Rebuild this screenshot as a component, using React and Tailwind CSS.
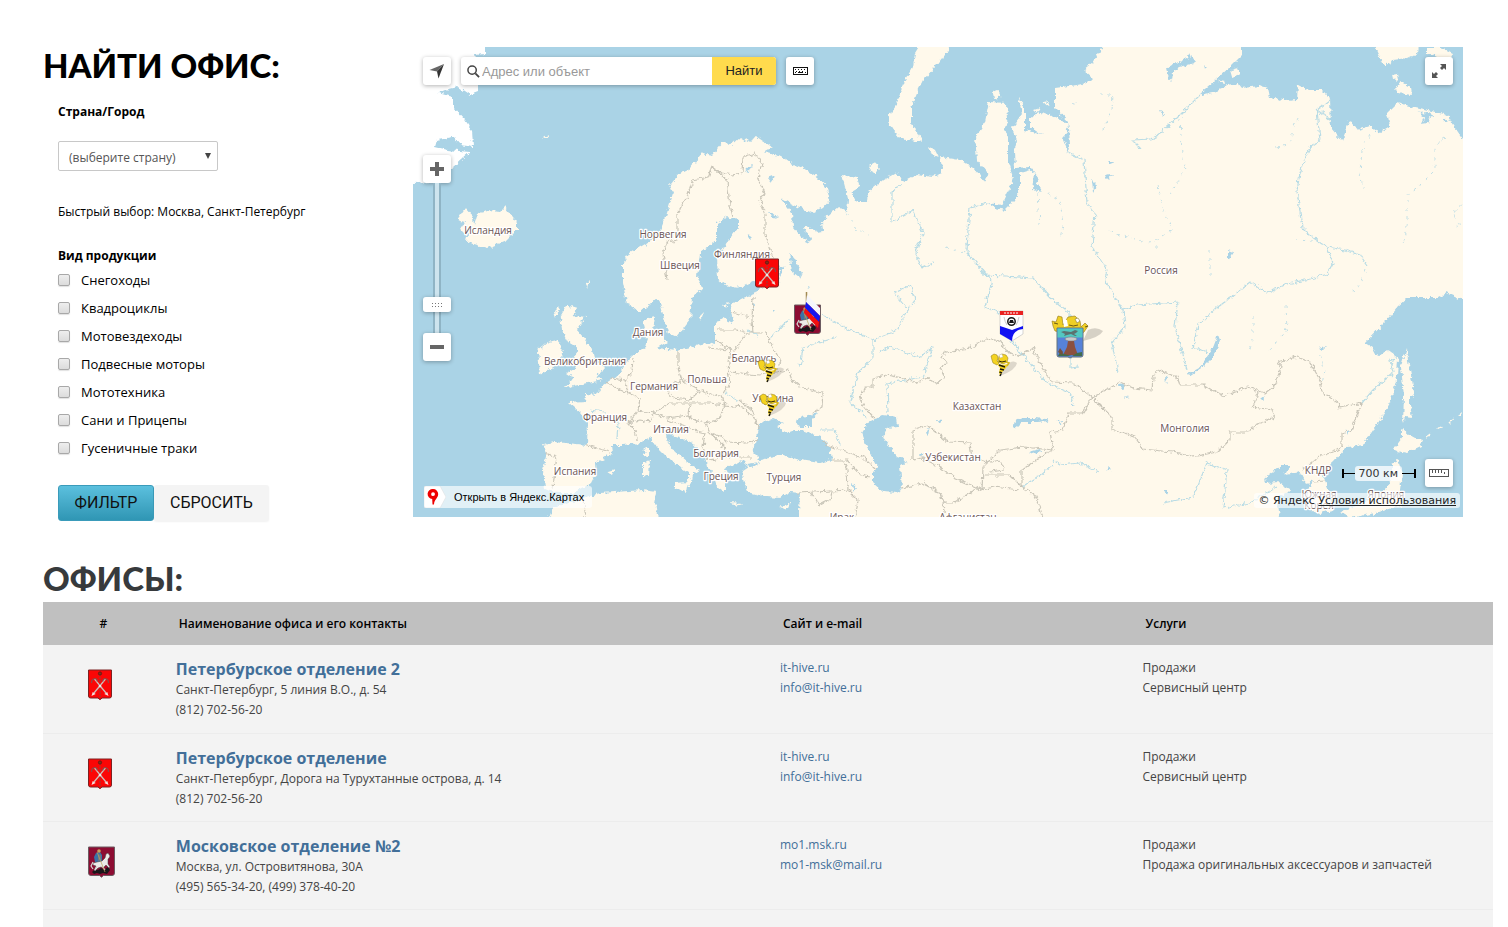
import React, { useState } from 'react'

const PRODUCTS = [
  'Снегоходы',
  'Квадроциклы',
  'Мотовездеходы',
  'Подвесные моторы',
  'Мототехника',
  'Сани и Прицепы',
  'Гусеничные траки',
]

const OFFICES = [
  {
    id: 1,
    city: 'spb',
    name: 'Петербурское отделение 2',
    address: 'Санкт-Петербург, 5 линия В.О., д. 54',
    phone: '(812) 702-56-20',
    site: 'it-hive.ru',
    email: 'info@it-hive.ru',
    services: ['Продажи', 'Сервисный центр'],
  },
  {
    id: 2,
    city: 'spb',
    name: 'Петербурское отделение',
    address: 'Санкт-Петербург, Дорога на Турухтанные острова, д. 14',
    phone: '(812) 702-56-20',
    site: 'it-hive.ru',
    email: 'info@it-hive.ru',
    services: ['Продажи', 'Сервисный центр'],
  },
  {
    id: 3,
    city: 'msk',
    name: 'Московское отделение №2',
    address: 'Москва, ул. Островитянова, 30А',
    phone: '(495) 565-34-20, (499) 378-40-20',
    site: 'mo1.msk.ru',
    email: 'mo1-msk@mail.ru',
    services: ['Продажи', 'Продажа оригинальных аксессуаров и запчастей'],
  },
]

const COUNTRIES = [
  ['Исландия', 488, 234],
  ['Норвегия', 663, 238],
  ['Швеция', 680, 269],
  ['Финляндия', 742, 258],
  ['Дания', 648, 336],
  ['Беларусь', 754, 362],
  ['Великобритания', 585, 365],
  ['Германия', 654, 390],
  ['Польша', 707, 383],
  ['Украина', 773, 402],
  ['Франция', 605, 421],
  ['Италия', 671, 433],
  ['Болгария', 716, 457],
  ['Греция', 721, 480],
  ['Испания', 575, 475],
  ['Турция', 784, 481],
  ['Россия', 1161, 274],
  ['Казахстан', 977, 410],
  ['Узбекистан', 953, 461],
  ['Монголия', 1185, 432],
  ['КНДР', 1318, 474],
  ['Южная', 1319, 498],
  ['Корея', 1319, 509],
  ['Япония', 1386, 498],
  ['Афганистан', 968, 521],
  ['Ирак', 842, 521],
]

const LAND = [
  // Eurasia
  'M670 185 680 173 690 168 702 153 712 155 723 142 731 145 740 137 748 142 757 137 772 147 763 152 782 157 790 163 803 168 817 177 827 188 830 200 823 208 813 213 797 207 780 198 792 213 793 227 802 238 810 242 811 237 803 230 806 226 818 232 823 231 822 221 832 212 838 207 847 212 848 200 845 187 842 175 857 178 860 187 850 193 857 202 867 202 868 192 883 180 898 172 903 182 917 175 933 177 942 173 942 167 940 157 960 160 973 168 985 182 988 173 977 160 975 137 985 122 989 102 1007 103 1008 118 1005 128 1008 137 1008 163 1013 177 1009 190 1002 205 988 203 995 208 1005 210 1015 200 1020 188 1020 173 1030 170 1035 173 1033 190 1042 192 1037 183 1039 178 1030 167 1015 168 1014 153 1017 140 1012 128 1022 115 1020 102 1018 97 1025 107 1025 130 1042 135 1030 127 1030 118 1042 112 1057 118 1067 123 1068 128 1063 140 1068 152 1070 143 1069 130 1068 122 1055 108 1055 88 1077 85 1087 83 1092 78 1083 70 1093 62 1107 40H1242V55L1230 67 1213 82 1200 93 1203 95 1217 92 1227 85 1238 83 1242 88 1260 86 1268 88 1270 97 1287 101 1297 100 1298 85 1308 90 1322 90 1330 98 1331 128 1342 141 1350 120 1358 130 1370 126 1380 133 1390 127 1387 113 1397 103 1420 108 1447 115 1453 125 1463 139 1475 145V297L1463 300 1447 293 1437 298 1407 298 1397 307 1387 320 1365 343 1373 348 1378 357 1387 350 1398 358 1397 377 1390 403 1380 420 1363 445 1347 447 1333 462 1317 473 1323 477 1330 493 1332 510 1316 514 1308 505V490L1313 480 1306 484 1300 472 1285 475 1290 465 1282 465 1265 478 1266 483 1277 482 1292 490 1277 497 1282 530H798L800 493 790 492 780 498 767 497 747 492 742 470 748 466 743 461 738 463 725 467 730 477 725 483V493L717 487 712 473 707 467 705 457 693 443 677 437 668 432 665 437 673 450 687 462 700 470 693 474 692 483 688 487V472L670 460 657 447 650 437 640 443 623 445 612 445 613 453 595 463 596 475 592 483 573 493 557 493 545 488 543 470 547 453 543 445 553 442 587 445 588 423 580 413 568 403 585 402 586 394 597 395 603 385 618 375 623 367 632 355 645 348 647 337 643 320 655 317 653 330 667 342 657 348 677 350 707 343 715 345V323L723 318 733 323 730 305 743 298 757 293 742 289 725 285 718 280 717 257 738 227V220L727 217 717 223V240L700 253 697 277 703 287 692 297 690 320 677 337 668 333 660 303 657 298 640 312 627 303 623 283V263L630 253 657 237 667 213 673 193Z',
  // British Isles
  'M567 305 577 308 573 315 585 317 577 330 583 337 592 350 595 362 605 367 597 377 603 380 587 383 565 388 573 377 567 373 575 368 574 360 578 348 568 342 562 330 560 317Z',
  'M557 340 563 347 560 363 540 375 538 350 548 342Z',
  // Iceland
  'M457 220 465 208 473 217 474 226 478 213 488 211 500 212 505 207 517 222V230L507 240 488 248 467 242 468 235 460 230 465 222Z',
  // North Africa
  'M545 530 553 507 577 500 600 493 643 490 657 492 655 503 660 530Z',
  // Mediterranean islands
  'M675 483 688 482 686 493 675 487Z M643 462 650 460 649 477 643 476Z M644 450 649 447 649 458 645 456Z M607 472 614 470 612 475Z M730 503 743 504 736 506Z M780 507 791 502 786 509Z',
  // Novaya Zemlya and arctic islands
  'M923 40H955L937 65 923 80 918 90 911 107V123L922 142 900 138 888 123V117L897 103 903 85 913 67 915 53Z',
  'M929 146 935 150 939 158 932 155Z M869 166 875 162 880 168 874 174Z M993 92 998 90 1002 97 994 99Z M1043 102 1049 101 1048 106Z M1034 110 1040 108 1037 113Z',
  'M1373 40 1376 50 1382 63 1390 65 1393 60 1408 58 1418 53 1420 40Z M1427 47H1440L1453 53 1450 60 1427 54Z M1395 90 1400 82 1411 88 1412 95 1398 93Z M1392 75 1397 74 1398 79 1393 80Z M1230 70 1238 68 1240 74 1232 77Z M1218 82 1225 79 1226 84Z',
  // Sakhalin, Hokkaido, Honshu
  'M1407 348 1408 360 1415 397 1410 395V407L1412 418 1405 417 1403 423 1404 397 1401 367Z',
  'M1402 428 1412 437 1423 440 1420 447 1407 453 1393 450 1402 438Z',
  'M1392 463 1398 460 1402 473 1400 490 1402 505 1380 512 1350 518 1340 512 1370 500 1387 488 1392 476Z',
  'M1425 437 1432 432 1429 438Z M1437 429 1443 425 1440 430Z M1448 422 1455 418 1450 424Z M1458 416 1463 412 1462 416Z',
  // small islands of the north Atlantic and the Baltic
  'M543 138 549 134 548 138Z M586 284 590 281 588 288Z M554 312 560 306 556 318Z M657 333 664 331 663 341 657 339Z M699 317 704 312 701 321Z M722 305 728 303 725 308Z',
]

const GREENLAND =
  'M400 40H485V54L475 55 478 68 470 72 478 82V92L470 95 458 87 445 90 438 93 453 97V107L465 120 472 130 473 147 460 145 453 137 437 140 435 147 448 150 470 152 453 167 430 182 400 184Z'

const SEAS = [
  // Black Sea and Azov
  'M772 418 783 423 777 427 787 433 795 430 802 430 820 437 830 447 832 460 820 463 800 460 783 455 760 460 752 452 757 437 760 423Z',
  'M795 420 808 415 818 413 812 420 812 427 800 427Z',
  // Caspian
  'M868 423 883 415 897 417 898 427 887 428 883 437 892 450 897 456 903 458 907 463 900 465 902 488 898 493 883 492 873 483V472L878 467 872 456 867 447 862 433Z',
  // Gulf of Finland
  'M722 290 742 287 755 281 778 277 781 282 765 285 755 292 742 297 720 302Z',
  // Ladoga, Onega
  'M789 253 794 258 802 272 799 278 792 272Z M778 265 785 268 780 277Z M752 300 755 305 753 310Z',
  // Baikal, Balkhash, Issyk-Kul
  'M1218 335 1220 340 1215 355 1203 367 1190 376 1187 374 1200 367 1212 350Z',
  'M1013 430 1015 421 1022 418 1035 418 1045 419 1049 421 1036 422 1022 422 1017 427Z',
  'M1029 452 1040 449 1041 452 1033 454Z',
  'M926 434 930 425 928 436Z M937 419 943 420 940 423Z M1058 420 1062 422 1061 425Z M1070 403 1076 407 1071 406Z M920 454 924 452 923 458Z M852 484 856 487 853 492Z M747 464 760 462 752 467Z',
  'M1119 385 1126 384 1124 389 1120 388Z M1165 376 1168 377 1166 384Z M1123 396 1129 397 1125 398Z M1261 399 1266 395 1263 401Z M1346 431 1350 430 1348 435Z M1162 491 1168 491 1167 495Z M1108 466 1112 469 1109 471Z',
  'M1166 70 1170 65 1180 62 1188 57 1190 53 1192 59 1195 63 1180 67 1173 72 1172 81 1169 77Z M1204 65 1207 68 1205 69Z M1160 111 1164 112 1162 115Z M1072 102 1075 103 1073 104Z',
  'M744 170 752 165 750 172Z M768 178 776 175 771 182Z M770 211 778 218 772 217Z M747 235 753 237 750 240Z M773 310 776 310 774 312Z M808 286 811 287 809 289Z M1418 113 1428 112 1432 115 1428 123 1421 124 1424 117Z M1443 118 1448 122 1444 122Z',
  'M1092 180 1097 185 1093 192Z M1108 162 1115 162 1110 164Z M1105 175 1112 174 1107 180Z M1228 250 1233 252 1228 260Z M1318 348 1327 346 1322 351Z',
]

const BORDERS = [
  'M667 280 663 253 667 242 677 240 677 213 687 197 693 180 708 177 712 167 722 173 733 175 742 173 743 157 755 153 762 163 758 178 765 193 760 200 765 215 765 235 772 255 775 260',
  'M712 167 727 180 730 205 733 217',
  'M633 358 632 373 625 380 628 393 640 398 638 410 628 423 635 430 637 440M605 382 620 390 628 393M612 378 625 380',
  'M678 350 678 367 682 380 665 388 673 398 690 400 700 390 712 395 722 396 730 383 728 370 731 350 708 348M682 380 700 390',
  'M638 410 653 413 670 403 690 403 688 415 667 418 653 413 650 422 640 420 628 423',
  'M690 403 710 403 725 405 718 420 705 423 693 420 688 415M722 396 725 405 743 407 755 420 760 430',
  'M705 423 710 433 723 437 727 442 747 443 757 440M667 420 693 430 705 433 703 447 707 460M710 433 725 447 723 457 710 460M723 457 753 457',
  'M587 445 610 452M545 453 557 457 555 470 553 488M586 517 583 500',
  'M717 330 738 330 747 333M732 312 743 315 752 317M715 340 727 348 735 350 747 333 753 333',
  'M730 372 760 375 788 370 792 380 800 387 823 393 822 407 812 413',
  'M753 297 752 320 753 333 765 333 780 360 778 370M740 400 752 410 758 425',
  'M874 419 865 408 860 398 865 387 873 387V378L887 375 903 378 917 383 927 378 935 383 945 378 940 368 948 363 942 358 945 352 970 348 988 338 1002 342 1007 352 1017 357 1033 348 1042 367 1052 382 1073 383 1092 397 1110 388 1120 382 1133 388 1152 390 1153 377 1158 370 1177 377 1180 385 1203 385 1223 396 1247 387 1265 393 1273 387 1282 367 1278 362 1297 357 1310 362 1320 380 1322 392 1338 402 1340 408 1362 403 1352 430 1342 433V447L1337 450 1317 458 1302 470',
  'M1258 392 1253 407 1273 410 1275 417 1260 423 1247 432 1230 432V440L1217 452 1192 457 1172 452 1143 449 1135 437 1112 430V417L1100 405 1092 397 1083 413 1068 413 1063 430 1050 432 1053 450 1040 457 1022 470V487L1037 497 1043 520',
  'M983 467 1000 450 1023 447 1053 450M987 463 1000 460 1005 470 990 472M985 475H1010L1022 487',
  'M913 460V430L928 425 948 442 970 443 972 457 987 463M902 488 922 483 940 493 943 503 953 503 978 488 953 477 940 467 922 458 913 460M982 490 993 487 1020 490M943 503 945 520M978 488 982 490 983 467',
  'M798 493 848 490 847 470 842 460 832 460M848 490 858 500 855 520M822 443 840 450 863 457 876 470M847 460 860 475 870 477M842 460 847 460M811 493 820 505 830 500 832 492M1313 482 1325 481',
]

const RIVERS = [
  'M987 203 970 208 968 230 967 253 987 275M980 270 992 280 985 307 1000 313 1013 343 1033 367 1047 383 1070 393 1073 403',
  'M987 275 1005 276 1033 278 1050 297 1070 313 1071 345M1071 358V368L1078 367',
  'M1068 152 1084 160 1087 203 1095 213 1092 247 1107 270 1105 280 1123 310 1125 327 1112 343 1118 373M1123 310 1137 305 1178 302 1175 327 1187 370',
  'M1317 110 1320 140 1310 147 1300 173 1297 190 1302 227 1312 237 1327 247 1333 263 1327 274 1310 279 1287 284 1267 293 1250 282 1217 308 1198 325 1193 347 1208 352',
  'M1317 110 1330 100M1317 110 1331 120M1200 95 1177 118 1160 133 1152 139 1132 140 1140 148',
  'M1362 403 1373 390 1393 373 1390 360 1396 358',
  'M1163 503 1193 497 1207 463 1227 470 1223 508 1250 503 1277 487',
  'M822 315 850 330 873 340V357L858 373 850 402 867 417M873 340 897 330 903 317 915 300 910 285 895 293 907 308',
  'M903 183 892 192V222L913 210 923 233 915 253 922 268 933 263M888 413 887 383 923 377 933 347 920 357 890 347 880 352',
  'M800 367 803 348 837 337M780 330 788 320 770 338M822 430 835 430 840 445M725 393 740 402M1327 247 1345 250 1360 255 1367 265',
  'M1053 460 1060 465 1080 463 1098 472M1022 487 1040 475 1052 465M618 421 617 440M590 410 605 412M747 330 758 336',
]

// rivers that dry up seasonally, drawn broken
const STREAMS = [
  'M1038 192 1040 225M1040 190 1060 200 1063 225 1060 240M946 248 965 253M965 235 968 250M847 213 855 228 870 235',
  'M1180 118 1182 155 1185 170 1170 195M1158 185 1163 210 1172 230 1150 243 1120 235 1108 230M1370 135 1362 150 1360 172 1363 190',
  'M1445 138 1435 145 1435 170 1415 190 1407 195V220L1403 245M1276 147 1290 145 1293 130 1298 118M1295 240 1313 241M1210 250V280',
  'M1286 305 1287 330 1270 350M1253 315V340L1247 352M1320 355 1325 370 1322 385M1366 270 1360 285 1348 295M1100 95H1113L1112 110 1103 130M1463 205 1453 212 1460 230M1155 248H1162',
]

function Shield({ city, ...props }) {
  if (city === 'spb') {
    return (
      <svg width="24" height="31" viewBox="0 0 24 31" {...props}>
        <path d="M.5 1h23v26q0 2-2 2h-7.500l-2 1.700-2-1.700H2.500q-2 0-2-2z" fill="#fb0606" stroke="#7d2222" />
        <path d="M6.500 10 18 24M17.500 10 6 24" stroke="#cfbcb8" strokeWidth="1.300" />
        <path d="M3.500 14q0-4 3.500-4.500 3 .5 2 3M20.500 14q0-4-3.500-4.500-3 .5-2 3" fill="none" stroke="#8e4a48" strokeWidth="1.200" />
        <path d="m3.500 27 1.200-4 3 2zM20.500 27l-1.200-4-3 2z" fill="#f4dfdc" />
        <path d="M12 5v23" stroke="#9c3c38" strokeWidth="1.200" strokeDasharray="2 1" />
        <circle cx="12" cy="4.500" r="1.600" fill="#80301c" stroke="#6b1a14" />
        <path d="m12 15 1.500 2-1.500 2-1.500-2z" fill="#eee" />
      </svg>
    )
  }
  return (
    <svg width="27" height="32" viewBox="0 0 27 32" {...props}>
      <path d="M.5 1h26v26q0 2.500-2.500 2.500h-8.500l-2 1.700-2-1.700H3Q.5 29.500.5 27z" fill="#8d0c32" stroke="#6c5b61" />
      {/* dragon */}
      <path d="m4 26 3-3 3 1 3-2 3 2 4-3 2 3-3 4-4-1-3 1-3-1-3 1z" fill="#19161a" />
      {/* rider */}
      <path d="m6 11 2-4 4-1 2 3v6l-3 2-4-1z" fill="#3972a6" />
      <path d="m10 8 3 1v5l-3 1z" fill="#73767c" />
      {/* horse */}
      <path d="m5 17 4-1 5-1 3-3 1-4 2-1 2 3-1 2-1 1v5l2 3-1 1-3-3-3 3-2-1-3 1-3 3-1-1 2-4-3-1z" fill="#eceae8" stroke="#403e41" strokeWidth=".5" />
      <path d="m5 16-2 4 2 3M14 20l3 4M9 20l-2 4" fill="none" stroke="#d8d4d2" strokeWidth="1.200" />
      <circle cx="11" cy="5" r="1.800" fill="#c89d5c" />
      <path d="m9 6 8 20" stroke="#baa85c" strokeWidth=".7" />
    </svg>
  )
}

function Bee({ x, y }) {
  return (
    <g transform={`translate(${x} ${y})`}>
      <path d="M9 23 15 12Q22 6 26 10 25 17 9 23" fill="#77736c" opacity=".25" />
      {/* raised fist and head */}
      <path d="m1 7-1-4 3-2 3 1 1 3-1 3 2 2-2 2-4-2z" fill="#f4d321" stroke="#8b7512" strokeWidth=".5" />
      <path d="m8 3 3-2 4 1 2 3-1 4-4 2-5-2z" fill="#f4d321" stroke="#8b7512" strokeWidth=".5" />
      <path d="m8 2 3-1 1 3-3 1z" fill="#fff" stroke="#999" strokeWidth=".3" />
      <path d="m8 8 3 1 4-1" fill="none" stroke="#2b2410" />
      {/* body */}
      <path d="m6 11 6 1 5-1-2 4-3 3-3 5-1-4 1-4z" fill="#f0cf20" />
      <path d="m8 12 6 2M9 16l4 1M8.500 19l2.500 1M9 23l1-2" stroke="#1d1a0c" strokeWidth="1.500" />
      <path d="m15 9 3 1-2 3" fill="none" stroke="#d9b81b" strokeWidth="1.500" />
    </g>
  )
}

function Markers() {
  return (
    <g>
      <Bee x={758} y={359} />
      <Bee x={760} y={393} />
      <Bee x={991} y={353} />
      <Shield city="spb" x="755" y="258" />
      <Shield city="msk" x="794" y="304" />
      {/* flag on the Moscow office */}
      <g>
        <path d="M806.500 292v22" stroke="#a28a52" strokeWidth="1.500" />
        <path d="m807 295 13 13v8l-14-14z" fill="#f5f5fb" />
        <path d="m806 302 14 14-1 6-14-14z" fill="#1616ef" />
        <path d="m805 308 14 14-1 6-14-15z" fill="#f21010" />
      </g>
      {/* white, red and blue coat of arms */}
      <g>
        <path d="M1000 311h23v23l-11 7-12-7z" fill="#fff" stroke="#bbb" strokeWidth=".6" />
        <path d="M1000 311h23v4h-23z" fill="#e92222" />
        <path d="M1004 313h15" stroke="#fff" strokeDasharray="2 1" />
        <path d="M1004 317q1 5 3 8M1019 317q-1 5-3 8" fill="none" stroke="#ccc" />
        <circle cx="1011.500" cy="321.500" r="3.700" fill="#fff" stroke="#181818" strokeWidth="1.500" />
        <path d="m1009 323 1-3h3l1 3z" fill="#181818" />
        <path d="m1000 326 12 4 11-4v3q-11 1-11 12l-12-7z" fill="#1010f2" />
      </g>
      {/* bee holding a coat of arms */}
      <g>
        <path d="m1083 341 5-11q8-4 15 1-3 6-20 10" fill="#77736c" opacity=".3" />
        <path d="m1053 326-1-5 4 1 2-6 4 1 1 8 5-8 7-1 5 5 1 6 4-4 3 3-4 6-6 4-23-5z" fill="#efcf25" stroke="#907719" strokeWidth=".6" />
        <path d="m1063 319 4 1 1 6-4 1z" fill="#fff" />
        <path d="m1075 319 3-1 2 3-3 2z" fill="#fff" stroke="#8a7a3a" strokeWidth=".6" />
        <path d="M1069 325q4 2 9 0M1054 323l4 1M1085 327l3-1" fill="none" stroke="#6b5915" />
        <path d="M1057 328h26v27q0 2-2 2h-9l-2 1-2-1h-9q-2 0-2-2z" fill="#5682d9" stroke="#65737a" />
        <path d="M1057.500 328.500h25v9h-25z" fill="#53c8c1" />
        <path d="m1061 332 3-1 7 1 4-2 3 1-2 2-2 1 3 2h-2l-4-2-4 1-3 1 1-2z" fill="#5c716f" />
        <path d="M1068 341h6l1 6 3 8h-15l4-8z" fill="#8b5040" />
        <ellipse cx="1071" cy="339" rx="6" ry="2" fill="#c8c8ca" stroke="#75757a" strokeWidth=".5" />
        <path d="m1058 356 2-4 4 2 8 2 5-3 5-1v4z" fill="#426c4d" />
        <path d="m1058 352 2-4 3 4-1 3z" fill="#74503f" />
      </g>
    </g>
  )
}

function WorldMap() {
  return (
    <svg className="block h-full w-full" viewBox="413 47 1050 470" preserveAspectRatio="xMidYMid slice" role="img" aria-label="Карта офисов">
      <defs>
        {/* roughens coastlines and borders */}
        <filter id="coast" filterUnits="userSpaceOnUse" x="393" y="27" width="1090" height="510" colorInterpolationFilters="sRGB">
          <feTurbulence type="fractalNoise" baseFrequency="0.22" numOctaves="3" seed="7" />
          <feDisplacementMap in="SourceGraphic" scale="6" xChannelSelector="R" yChannelSelector="G" />
        </filter>
      </defs>
      <rect x="393" y="27" width="1090" height="510" fill="#aad3e6" />
      <g filter="url(#coast)">
        <path d={GREENLAND} fill="#fff" />
        <path d={LAND.join('')} fill="#fff9eb" />
        <path d={SEAS.join('')} fill="#aad3e6" />
        <g fill="none" strokeLinejoin="round">
          <path d={RIVERS.join('')} stroke="#b9dce5" strokeWidth="1.200" />
          <path d={STREAMS.join('')} stroke="#c3e0e6" strokeDasharray="3 5" />
          <path d={BORDERS.join('')} stroke="#c9c5b8" strokeWidth="1.200" />
        </g>
      </g>
      <g className="font-['Open_Sans',sans-serif] text-[10px]" textAnchor="middle" fill="#6b5454" stroke="#fff" strokeWidth="2.500" strokeLinejoin="round" paintOrder="stroke">
        {COUNTRIES.map(([name, x, y]) => (
          <text key={name} x={x} y={y}>{name}</text>
        ))}
      </g>
      <Markers />
    </svg>
  )
}

function MapButton({ label, children }) {
  return (
    <button type="button" aria-label={label} className="flex h-7 w-7 items-center justify-center rounded-[3px] bg-white shadow-[0_1px_4px_rgba(0,0,0,0.3)]">
      {children}
    </button>
  )
}

function MapPanel() {
  const [zoom, setZoom] = useState(3)

  return (
    <div className="relative h-[470px] min-w-0 flex-1 overflow-hidden">
      <WorldMap />

      {/* Top toolbar */}
      <div className="absolute inset-x-[10px] top-[10px] flex gap-[10px]">
        <MapButton label="Моё местоположение">
          <svg width="16" height="16" viewBox="0 0 16 16">
            <path d="M15 1 .5 7 8 8.500z" fill="#666" />
            <path d="M15 1 8 8.500 9.500 15.500z" fill="#333" />
          </svg>
        </MapButton>
        <form className="flex h-7 w-[315px] rounded-[3px] bg-white font-['Liberation_Sans',Arial,sans-serif] text-[13px] shadow-[0_1px_4px_rgba(0,0,0,0.3)]" onSubmit={(e) => e.preventDefault()}>
          <label className="flex min-w-0 flex-1 items-center gap-[2px] pl-[6px]">
            <svg width="13" height="13" viewBox="0 0 14 14" fill="none" stroke="#444">
              <circle cx="5.500" cy="5.500" r="4.500" strokeWidth="1.600" />
              <path d="m9 9 4 4" strokeWidth="2" />
            </svg>
            <input type="text" aria-label="Адрес или объект" placeholder="Адрес или объект" className="h-7 min-w-0 flex-1 outline-none placeholder:text-[#999]" />
          </label>
          <button type="submit" className="w-16 rounded-r-[3px] bg-[#ffdb4d] text-[#222]">Найти</button>
        </form>
        <MapButton label="Клавиатура">
          <svg width="15" height="8" viewBox="0 0 15 8" fill="none" stroke="#111">
            <rect x=".5" y=".5" width="14" height="7" />
            <path d="M2 2.500h11M3 4.500h9" strokeDasharray="1 2" />
            <path d="M2 5.500h1M5 5.500h5M12 5.500h1" />
          </svg>
        </MapButton>
        <div className="ml-auto">
          <MapButton label="На весь экран">
            <svg width="14" height="14" viewBox="0 0 14 14" fill="#555">
              <path d="M8 0h6v6l-2-2-2 2-2-2 2-2zM6 14H0V8l2 2 2-2 2 2-2 2z" />
            </svg>
          </MapButton>
        </div>
      </div>

      {/* Zoom */}
      <div className="absolute left-[10px] top-[108px] flex flex-col items-center">
        <MapButton label="Приблизить">
          <svg width="14" height="14" viewBox="0 0 14 14" fill="#666"><path d="M5 0h4v5h5v4H9v5H5V9H0V5h5z" /></svg>
        </MapButton>
        <input
          type="range"
          min="0"
          max="19"
          value={zoom}
          aria-label="Масштаб"
          onChange={(e) => setZoom(Number(e.target.value))}
          className="block h-[150px] w-7 appearance-none bg-[linear-gradient(90deg,#8fb4c5_0_2px,#cde4ee_2px_6px,#8fb4c5_6px_8px)] bg-[length:8px_100%] bg-center bg-no-repeat [direction:rtl] [writing-mode:vertical-lr] [&::-webkit-slider-thumb]:h-[15px] [&::-webkit-slider-thumb]:w-7 [&::-webkit-slider-thumb]:appearance-none [&::-webkit-slider-thumb]:rounded-[3px] [&::-webkit-slider-thumb]:bg-[linear-gradient(90deg,#fff_9px,transparent_9px_19px,#fff_19px),linear-gradient(#fff_6px,transparent_6px_7px,#fff_7px_9px,transparent_9px_10px,#fff_10px),repeating-linear-gradient(90deg,#777_0_1px,#fff_1px_3px)] [&::-webkit-slider-thumb]:shadow-[0_1px_4px_rgba(0,0,0,0.3)]"
        />
        <MapButton label="Отдалить">
          <svg width="14" height="4" viewBox="0 0 14 4" fill="#666"><path d="M0 0h14v4H0z" /></svg>
        </MapButton>
      </div>

      {/* Yandex link */}
      <a href="#yandex" className="absolute bottom-[9px] left-[11px] flex h-[22px] items-center gap-2 rounded-[3px] bg-white/65 pr-2 font-['Liberation_Sans',Arial,sans-serif] text-[11px] text-black">
        <svg width="22" height="22" viewBox="0 0 22 22">
          <path d="M2 0h14l6 11-6 11H2q-2 0-2-2V2q0-2 2-2" fill="#fff" stroke="#ddd" strokeWidth=".5" />
          <path d="M9 3a5 5 0 0 1 5.200 5c0 4.500-4 5-4.200 10.500H8.500L8.200 13A5 5 0 0 1 9 3m0 3.200a1.900 1.900 0 1 0 .1 3.800 1.900 1.900 0 0 0-.1-3.800" fill="#e00" fillRule="evenodd" />
        </svg>
        Открыть в Яндекс.Картах
      </a>

      {/* Scale and copyright */}
      <div className="absolute bottom-[30px] right-[10px] flex items-center gap-[9px]">
        <div className="flex items-center font-['DejaVu_Sans',Verdana,sans-serif] text-[11px] text-[#333]">
          <span className="h-[9px] w-[13px] border-l-2 border-black bg-[linear-gradient(#000,#000)] bg-[length:100%_1px] bg-center bg-no-repeat" />
          <span className="rounded-[3px] bg-white/75 px-1 leading-[15px]">700 км</span>
          <span className="h-[9px] w-[14px] border-r-2 border-black bg-[linear-gradient(#000,#000)] bg-[length:100%_1px] bg-center bg-no-repeat" />
        </div>
        <MapButton label="Линейка">
          <svg width="20" height="8" viewBox="0 0 20 8" fill="none" stroke="#555">
            <rect x=".5" y=".5" width="19" height="7" />
            <path d="M3.500 1v3M6.500 1v3M9.500 1v3M12.500 1v3M15.500 3v2" />
          </svg>
        </MapButton>
      </div>
      <div className="absolute bottom-[9px] right-[3px] rounded-[3px] bg-white/65 px-1 font-['DejaVu_Sans',Verdana,sans-serif] text-[11px] leading-[15px] text-[#222]">
        © Яндекс <a href="#terms" className="underline">Условия использования</a>
      </div>
    </div>
  )
}

function FilterForm() {
  return (
    <form className="pl-[15px] text-[13px] leading-5" onSubmit={(e) => e.preventDefault()}>
      <label htmlFor="country" className="mt-[19px] block text-[12px] font-bold">Страна/Город</label>
      <div className="relative mt-[19px] w-40">
        <select id="country" className="h-[30px] w-full appearance-none rounded-[2px] border border-[#c8c8c8] bg-white pt-[3px] pl-[10px] text-[12px] text-[#555]">
          <option>(выберите страну)</option>
        </select>
        <svg className="pointer-events-none absolute right-[7px] top-[12px]" width="6" height="6" viewBox="0 0 6 6" fill="#444">
          <path d="M0 0h6L3 6z" />
        </svg>
      </div>
      <p className="mt-[31px] text-[12px]">
        Быстрый выбор: <a href="#moscow">Москва</a>, <a href="#spb">Санкт-Петербург</a>
      </p>

      <fieldset className="mt-6">
        <legend className="text-[12px] font-bold">Вид продукции</legend>
        {PRODUCTS.map((item) => (
          <label key={item} className="flex h-7 items-center gap-[11px]">
            <input type="checkbox" className="h-3 w-3 appearance-none rounded-[2px] border border-[#a8a8a8] bg-linear-to-b from-[#eee] to-[#dcdcdc] shadow-[0_1px_1px_rgba(0,0,0,0.12)] checked:bg-[#45a9c9]" />
            {item}
          </label>
        ))}
      </fieldset>

      <div className="mt-[23px] flex font-[Roboto,sans-serif] text-[16px]">
        <button type="submit" className="h-9 w-24 rounded-[3px] border border-[#3a9bba] bg-linear-to-b from-[#5bc0de] to-[#2f96b4] text-[#111]">ФИЛЬТР</button>
        <button type="reset" className="h-9 rounded-[3px] bg-[#f4f4f4] px-4 text-[#111] shadow-[0_1px_2px_rgba(0,0,0,0.06)]">СБРОСИТЬ</button>
      </div>
    </form>
  )
}

function OfficeTable() {
  return (
    <table className="w-full table-fixed border-collapse text-left text-[12px] leading-5 text-[#444]">
      <colgroup>
        <col className="w-1/12" />
        <col className="w-5/12" />
        <col className="w-3/12" />
        <col className="w-3/12" />
      </colgroup>
      <thead className="bg-[#c0c0c0] text-[12px] text-black">
        <tr className="h-[43px]">
          <th className="text-center font-semibold">#</th>
          <th className="pl-[15px] font-semibold">Наименование офиса и его контакты</th>
          <th className="pl-[15px] font-semibold">Сайт и e-mail</th>
          <th className="pl-[15px] font-semibold">Услуги</th>
        </tr>
      </thead>
      <tbody>
        {OFFICES.map((office) => (
          <tr key={office.id} className="h-[88px] border-b border-[#ececec] align-top">
            <td className="pl-[45px] pt-6">
              <Shield city={office.city} />
            </td>
            <td className="pl-3 pt-[13px]">
              <a href="#office" className="block text-[16px] leading-[22px] font-bold text-[#426f99]">{office.name}</a>
              <p>{office.address}</p>
              <p>{office.phone}</p>
            </td>
            <td className="pl-3 pt-[13px] text-[#426f99]">
              <a href="#site" className="block">{office.site}</a>
              <a href="#mail" className="block">{office.email}</a>
            </td>
            <td className="pl-3 pt-[13px]">
              {office.services.map((service) => (
                <p key={service}>{service}</p>
              ))}
            </td>
          </tr>
        ))}
      </tbody>
    </table>
  )
}

const App = () => {
  return (
    <main className="flex min-h-screen flex-col bg-white pl-[43px] font-['Open_Sans',sans-serif] text-black">
      <div className="flex pr-[45px] pt-[47px]">
        <section className="w-[370px] shrink-0">
          <h1 className="font-[Lato,sans-serif] text-[33px] leading-9 font-black">НАЙТИ ОФИС:</h1>
          <FilterForm />
        </section>
        <MapPanel />
      </div>

      <section className="mt-[39px] mr-[15px] flex flex-1 flex-col">
        <h2 className="mb-[6px] font-[Lato,sans-serif] text-[33px] leading-9 font-black text-[#373a3c]">ОФИСЫ:</h2>
        <div className="flex-1 bg-[#f3f3f3]">
          <OfficeTable />
        </div>
      </section>
    </main>
  )
}

export default App
